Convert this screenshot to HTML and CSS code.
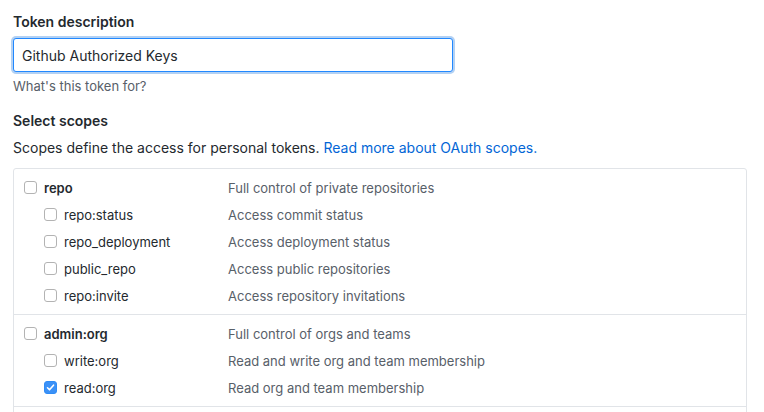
FILE: index.html
```html
<!DOCTYPE html>
<html lang="en">
<head>
    <meta charset="UTF-8">
    <title>New personal access token</title>
    <link rel="stylesheet" href="styles.css">
</head>
<body>
<div class="page">
    <!--token description-->
    <label class="field-label" for="token_desc">Token description</label>
    <input type="text" class="token-input" id="token_desc" value="Github Authorized Keys">
    <p class="note">What's this token for?</p>

    <!--scopes-->
    <h3 class="field-label scopes-title">Select scopes</h3>
    <p class="scopes-desc">Scopes define the access for personal tokens. <a href="#">Read more about OAuth scopes.</a></p>

    <div class="scopes">
        <div class="scope-group">
            <div class="scope-row">
                <label class="scope-name top"><input type="checkbox" class="cb">repo</label>
                <span class="scope-text">Full control of private repositories</span>
            </div>
            <div class="scope-row">
                <label class="scope-name child"><input type="checkbox" class="cb">repo:status</label>
                <span class="scope-text">Access commit status</span>
            </div>
            <div class="scope-row">
                <label class="scope-name child"><input type="checkbox" class="cb">repo_deployment</label>
                <span class="scope-text">Access deployment status</span>
            </div>
            <div class="scope-row">
                <label class="scope-name child"><input type="checkbox" class="cb">public_repo</label>
                <span class="scope-text">Access public repositories</span>
            </div>
            <div class="scope-row">
                <label class="scope-name child"><input type="checkbox" class="cb">repo:invite</label>
                <span class="scope-text">Access repository invitations</span>
            </div>
        </div>
        <div class="scope-group">
            <div class="scope-row">
                <label class="scope-name top"><input type="checkbox" class="cb">admin:org</label>
                <span class="scope-text">Full control of orgs and teams</span>
            </div>
            <div class="scope-row">
                <label class="scope-name child"><input type="checkbox" class="cb">write:org</label>
                <span class="scope-text">Read and write org and team membership</span>
            </div>
            <div class="scope-row">
                <label class="scope-name child"><input type="checkbox" class="cb" checked>read:org</label>
                <span class="scope-text">Read org and team membership</span>
            </div>
        </div>
        <div class="scope-group rest"></div>
    </div>
</div>
</body>
</html>
```

FILE: styles.css
```css
* {
    box-sizing: border-box;
}
body {
    margin: 0;
    background: #fff;
    color: #24292e;
    font-family: Inter, "Liberation Sans", sans-serif;
    font-size: 14px;
    overflow: hidden;
}
.page {
    padding: 12px 17px 0 13px;
}
.field-label {
    display: block;
    margin: 0;
    font-size: 14px;
    line-height: 20px;
    font-weight: 600;
}
.token-input {
    display: block;
    width: 440px;
    height: 34px;
    margin-top: 6px;
    padding: 0 8px;
    font-family: inherit;
    font-size: 14px;
    color: #24292e;
    border: 1px solid #2188ff;
    border-radius: 3px;
    box-shadow: 0 0 0 2px rgba(3, 102, 214, 0.3);
    outline: none;
}
.note {
    margin: 5px 0 0;
    font-size: 13px;
    line-height: 18px;
    color: #586069;
}
.scopes-title {
    margin-top: 16px;
}
.scopes-desc {
    margin: 7px 0 0;
    line-height: 20px;
}
.scopes-desc a {
    color: #0366d6;
    text-decoration: none;
}
.scopes {
    margin-top: 10px;
    border: 1px solid #e1e4e8;
    border-radius: 3px;
}
.scope-group {
    padding: 5px 0;
    border-bottom: 1px solid #e1e4e8;
}
.scope-group.rest {
    height: 40px;
    border-bottom: 0;
}
.scope-row {
    display: flex;
    align-items: center;
    height: 27px;
    font-size: 13px;
}
.scope-name {
    display: flex;
    align-items: center;
    width: 214px;
    padding-left: 10px;
}
.scope-name.top {
    font-weight: 600;
}
.scope-name.child {
    padding-left: 30px;
}
.scope-text {
    color: #586069;
}
.cb {
    appearance: none;
    -webkit-appearance: none;
    width: 13px;
    height: 13px;
    margin: 0 7px 0 0;
    border: 1px solid #b3b3b3;
    border-radius: 3px;
    background: #fff;
}
.cb:checked {
    border-color: #2f8cf6;
    background: #3b91f7 url("data:image/svg+xml;utf8,<svg xmlns='http://www.w3.org/2000/svg' viewBox='0 0 13 13'><path d='M3.5 6.8l2 2 4-4.6' fill='none' stroke='white' stroke-width='1.6' stroke-linecap='round' stroke-linejoin='round'/></svg>") center/13px no-repeat;
}
```
